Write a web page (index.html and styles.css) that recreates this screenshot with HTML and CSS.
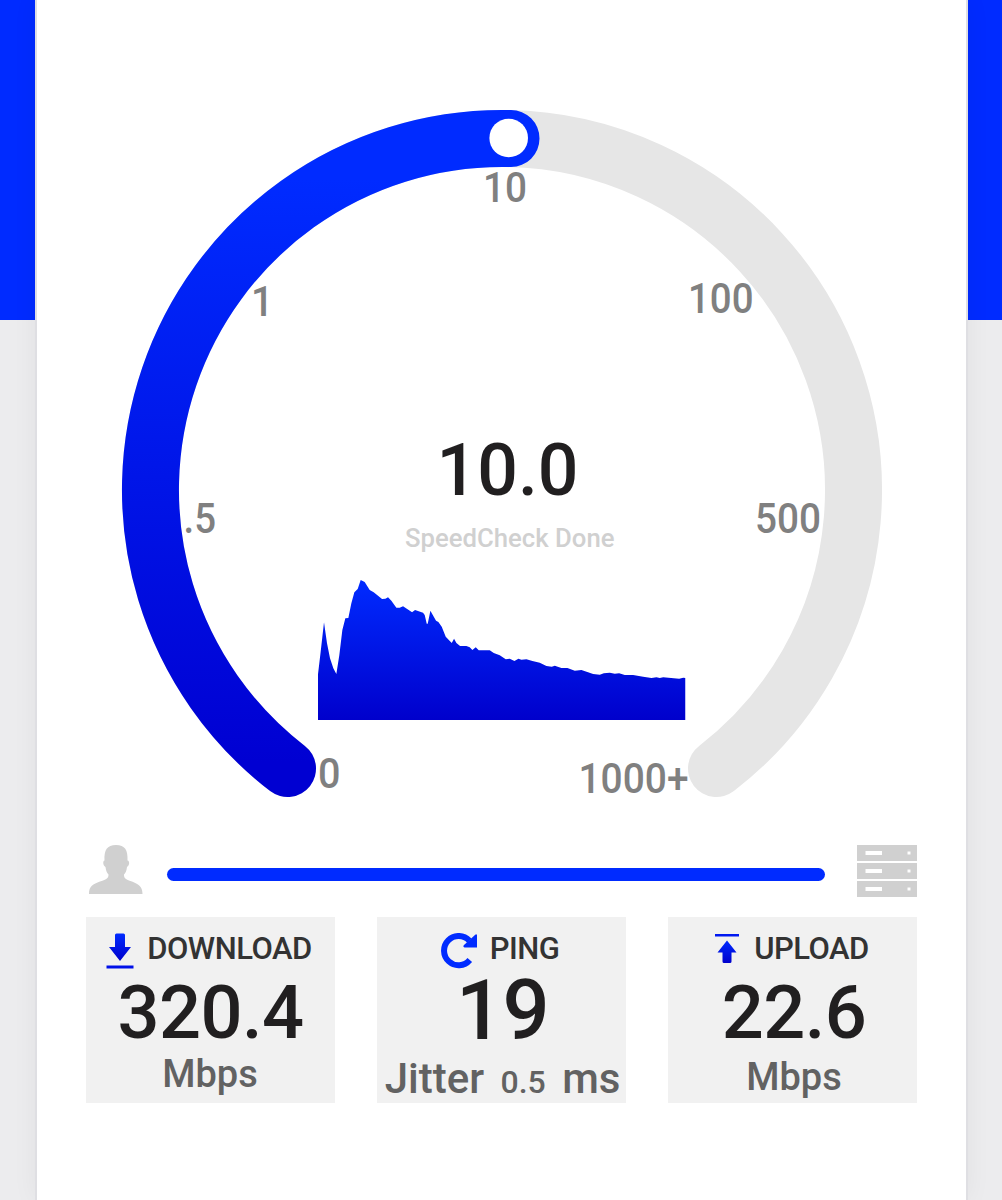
FILE: index.html
```html
<!DOCTYPE html>
<html lang="en">

<head>
    <meta charset="UTF-8" />
    <meta name="viewport" content="width=device-width, initial-scale=1" />
    <title>SpeedCheck</title>
    <link rel="stylesheet" href="styles.css">
</head>

<body>

    <main class="panel">

        <!-- Speed gauge -->
        <svg class="gauge" viewBox="0 0 760 687">
            <defs>
                <linearGradient id="arc-fill" gradientUnits="userSpaceOnUse" x1="0" y1="0" x2="0" y2="687">
                    <stop offset="0.1" stop-color="#002bff" />
                    <stop offset="0.95" stop-color="#0000d2" />
                </linearGradient>
                <linearGradient id="chart-fill" x1="0" y1="0" x2="0" y2="1">
                    <stop offset="0" stop-color="#002bff" />
                    <stop offset="1" stop-color="#0000cc" />
                </linearGradient>
            </defs>

            <path class="arc track" d="M165.500 658.500A351.500 351.500 0 1 1 594.500 658.500" />
            <path class="arc value" d="M165.500 658.500A351.500 351.500 0 0 1 380 28.500H389" />
            <circle cx="386.700" cy="28" r="19.300" fill="#fff" />

            <g class="ticks">
                <text x="196" y="677.500" textLength="22.500" lengthAdjust="spacingAndGlyphs">0</text>
                <text x="61.500" y="422.500" textLength="32.500" lengthAdjust="spacingAndGlyphs">.5</text>
                <text x="129" y="205.500" textLength="22.500" lengthAdjust="spacingAndGlyphs">1</text>
                <text x="361" y="92" textLength="44" lengthAdjust="spacingAndGlyphs">10</text>
                <text x="566" y="203" textLength="65.500" lengthAdjust="spacingAndGlyphs">100</text>
                <text x="633" y="422.500" textLength="66" lengthAdjust="spacingAndGlyphs">500</text>
                <text x="456.500" y="682.500" textLength="110" lengthAdjust="spacingAndGlyphs">1000+</text>
            </g>

            <text class="speed" x="314.500" y="385" textLength="142" lengthAdjust="spacingAndGlyphs">10.0</text>
            <text class="status" x="283" y="436.500" textLength="209.500" lengthAdjust="spacingAndGlyphs">SpeedCheck Done</text>

            <svg x="196" y="470" width="367.500" height="140" viewBox="55 60 1102 420" preserveAspectRatio="none">
                <path fill="url(#chart-fill)" d="M55 480V343L63 275L73 187L82 250L91 295L101 325L110 342L119 285L128 210L137 175L146 174L155 130L164 97L174 87L183 60L195 66L210 90L222 97L247 117L257 116L265 112L275 122L290 143H300L310 139L337 157L346 150L370 158L375 165L381 191H384L392 152L409 182L416 186L426 200L438 230L456 249L463 236L470 249L481 258H500L510 262L518 270L528 262L537 271H570L582 279L600 286L618 298L630 296L644 303L656 296L665 299L680 298L698 303L720 308L740 318L756 320L765 317L785 324H803L825 332L845 330L880 342L900 344L912 340L930 338L945 341L958 340L975 345H1000L1030 350L1055 354L1070 352L1080 354L1090 352L1138 356L1150 353L1157 354V480Z" />
            </svg>
        </svg>

        <!-- Client to server progress -->
        <div class="route">
            <svg class="icon-user" viewBox="0 0 54 50">
                <path d="M27 0C18 0 15 5 15.500 15.500C13.500 16 14 20.500 16.500 22C17 26 18 28 19.500 29.500C19.500 33 18 34.500 11 36.500C4 39 0 41 0 49H53.500C53.500 41 49 39 43 36.500C36 34.500 35 33 35 29.500C36.500 28 37.500 26 38 22C40.500 20.500 41 16 38.500 15.500C39 5 36 0 27 0Z" />
            </svg>
            <div class="progress"></div>
            <svg class="icon-server" viewBox="0 0 60 52">
                <path fill-rule="evenodd" d="M0 0H60V16H0ZM8.500 6V10H25V6ZM50.500 6.500V9.500H53.500V6.500Z" />
                <path fill-rule="evenodd" d="M0 18H60V34H0ZM8.500 24V28H25V24ZM50.500 24.500V27.500H53.500V24.500Z" />
                <path fill-rule="evenodd" d="M0 36H60V52H0ZM8.500 42V46H25V42ZM50.500 42.500V45.500H53.500V42.500Z" />
            </svg>
        </div>

        <!-- Results -->
        <div class="results">
            <section class="card download">
                <h2>
                    <svg width="28" height="36" viewBox="0 0 28 36" fill="url(#chart-fill)">
                        <path d="M10.500 0.500H17.500Q19 0.500 19 2V14H25L14 28L3 14H9V2Q9 0.500 10.500 0.500Z" />
                        <path d="M0.500 32.500H27.500V35.500H0.500Z" fill="#0010e8" />
                    </svg>
                    <span>DOWNLOAD</span>
                </h2>
                <div class="number">320.4</div>
                <div class="unit">Mbps</div>
            </section>

            <section class="card ping">
                <h2>
                    <svg width="36" height="36" viewBox="0 0 36 36">
                        <path d="M28.800 27A14.600 14.600 0 1 1 28.300 7.600" fill="none" stroke="#002bff" stroke-width="6" />
                        <path d="M36 1.500V14.500H23.500Q21.500 13.500 23 12L34.500 1.500Z" fill="#002bff" />
                    </svg>
                    <span>PING</span>
                </h2>
                <div class="number">19</div>
                <div class="unit">Jitter <small>0.5</small> ms</div>
            </section>

            <section class="card upload">
                <h2>
                    <svg width="24" height="36" viewBox="0 0 24 36" fill="url(#chart-fill)">
                        <path d="M0 1H24V3.500H0Z" fill="#0018f0" />
                        <path d="M12 7.500L21.500 19.500H16.500V28.500Q16.500 30 15 30H9Q7.500 30 7.500 28.500V19.500H2.500Z" />
                    </svg>
                    <span>UPLOAD</span>
                </h2>
                <div class="number">22.6</div>
                <div class="unit">Mbps</div>
            </section>
        </div>

    </main>

</body>

</html>
```

FILE: styles.css
```css
* {
    margin: 0;
    padding: 0;
    box-sizing: border-box;
}

body {
    min-height: 1200px;
    padding: 0 34px 0 35px;
    overflow: hidden;
    background: linear-gradient(#002bff 320px, #ececee 320px);
    font-family: Roboto, sans-serif;
    font-weight: 500;
}

.panel {
    height: 1200px;
    padding: 110px 49px 0 49px;
    border: solid #dfdfe3;
    border-width: 0 2px;
    background: #fff;
    box-shadow: 0 0 24px rgba(0, 0, 0, 0.05);
}

svg {
    display: block;
    flex: none;
}

/* gauge */
.gauge {
    width: 760px;
    height: 687px;
    margin-left: 36px;
    overflow: visible;
}

.arc {
    fill: none;
    stroke-width: 57;
    stroke-linecap: round;
}

.track {
    stroke: #e6e6e6;
}

.value {
    stroke: url(#arc-fill);
}

.ticks {
    font-size: 43px;
    fill: #808080;
}

.speed {
    font-size: 73px;
    fill: #211f20;
}

.status {
    font-size: 26px;
    fill: #d0d0d0;
}

/* progress */
.route {
    display: flex;
    align-items: center;
    height: 54px;
    margin-top: 47px;
    padding-left: 3px;
    fill: #d0d0d0;
}

.icon-user {
    width: 54px;
    height: 50px;
    margin-bottom: 3px;
}

.icon-server {
    width: 60px;
    height: 52px;
}

.progress {
    flex: 1;
    height: 13px;
    margin: 6px 32px 0 24px;
    border-radius: 7px;
    background: #002bff;
}

/* results */
.results {
    display: grid;
    grid-template-columns: repeat(3, 249px);
    justify-content: space-between;
    margin-top: 19px;
}

.card {
    height: 186px;
    background: #f1f1f1;
    text-align: center;
    white-space: nowrap;
}

.card h2 {
    display: flex;
    justify-content: center;
    height: 52px;
    padding-top: 16px;
    font-size: 31px;
    font-weight: 500;
    line-height: 31px;
    letter-spacing: -0.5px;
    color: #333;
}

.download h2 {
    gap: 13px;
    padding-right: 3px;
}

.ping h2 {
    gap: 13px;
    padding-right: 3px;
}

.upload h2 {
    gap: 15px;
    padding-right: 1px;
}

.number {
    height: 86px;
    font-size: 74px;
    line-height: 87px;
    letter-spacing: -0.6px;
    color: #211f20;
}

.ping .number {
    height: 91px;
    font-size: 83px;
    line-height: 83px;
    padding-left: 2px;
}

.upload .number {
    height: 89px;
    padding-left: 3px;
}

.unit {
    font-size: 38px;
    line-height: 38px;
    color: #626262;
}

.download .unit {
    padding-right: 1px;
}

.ping .unit {
    font-size: 42px;
    word-spacing: 6px;
    padding-left: 2px;
}

.upload .unit {
    padding-left: 3px;
}

.unit small {
    font-size: 32px;
    font-weight: 500;
}
```
